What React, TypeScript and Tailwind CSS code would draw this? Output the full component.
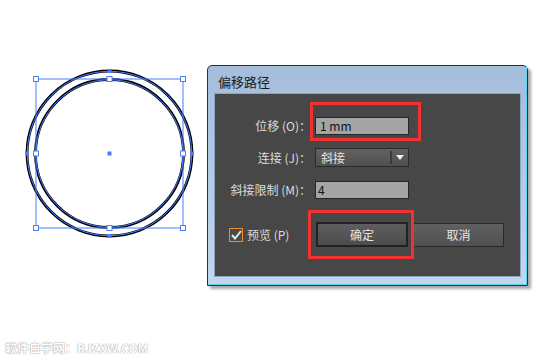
import React from "react";

const CJK = "font-['SimSun','Noto_Sans_CJK_SC',sans-serif]";

const BLUE = "#4a7dff";

// selected artwork: original circle + offset path with bounding box
const Artwork = () => {
  const cx = 109.5;
  const cy = 153.5;
  const handles = [
    [36, 79], [109.5, 79], [183, 79],
    [36, 153.5], [183, 153.5],
    [36, 228], [109.5, 228], [183, 228],
  ];
  const anchors = [
    [cx, 71], [cx, 236], [27, cy], [192, cy],
  ];
  return (
    <svg width="200" height="300" className="shrink-0">
      <circle cx={cx} cy={cy} r={82.5} fill="none" stroke="#000" strokeWidth={2.8} />
      <circle cx={cx} cy={cy} r={82.2} fill="none" stroke={BLUE} strokeWidth={1} />
      <circle cx={cx} cy={cy} r={74} fill="none" stroke="#000" strokeWidth={2.8} />
      <circle cx={cx} cy={cy} r={73.7} fill="none" stroke={BLUE} strokeWidth={1} />
      <rect x={36} y={79} width={147} height={149} fill="none" stroke={BLUE} strokeWidth={1} />
      {handles.map(([x, y], i) => (
        <rect key={i} x={x - 2.5} y={y - 2.5} width={5} height={5} fill="#fff" stroke={BLUE} strokeWidth={1} />
      ))}
      {anchors.map(([x, y], i) => (
        <rect key={i} x={x - 2} y={y - 2} width={4} height={4} fill={BLUE} />
      ))}
      <rect x={cx - 2} y={cy - 2} width={4} height={4} fill={BLUE} />
    </svg>
  );
};

const Label = ({ children }: { children: React.ReactNode }) => (
  <span className={`w-[100px] shrink-0 pr-[4px] text-right text-[12px] leading-none text-[#dcdcdc] ${CJK}`}>
    {children}
  </span>
);

const OffsetDialog = () => (
  <div className="relative mt-[65px] ml-[7px] h-[221px] w-[321px] shrink-0 rounded-t-[5px] border border-[#2e2e2e] bg-linear-to-b from-[#a4bddb] to-[#c2d7ee] shadow-[3px_3px_3px_rgba(0,0,0,0.35)]">
    <div className="flex h-full flex-col border-r border-b border-[#5ed2f4] pr-[5px] pb-[7px] pl-[6px]">
      {/* title */}
      <div className="flex h-[27px] shrink-0 items-center pl-[4px] pt-[3px]">
        <span className={`text-[13px] leading-none text-[#1a1a1a] ${CJK}`}>偏移路径</span>
      </div>

      {/* panel */}
      <div className="flex flex-1 flex-col border border-[#8aa4c4] bg-[#474747] pt-[23px]">
        <div className="flex items-center">
          <Label>位移 (O)：</Label>
          <div className={`flex h-[18px] w-[94px] items-center border border-[#262626] bg-[#a4a4a4] pl-[4px] text-[12px] text-[#111] ${CJK}`}>
            1 mm
          </div>
        </div>

        <div className="mt-[13px] flex items-center">
          <Label>连接 (J)：</Label>
          <div className="flex h-[19px] w-[94px] items-center border border-[#2b2b2b] bg-linear-to-b from-[#626262] to-[#4f4f4f]">
            <span className={`flex-1 pl-[5px] text-[12px] leading-none text-[#e4e4e4] ${CJK}`}>斜接</span>
            <span className="h-[13px] w-[2px] border-x border-x-[#3a3a3a] bg-[#6e6e6e]" />
            <span className="flex w-[16px] justify-center">
              <svg width="8" height="5" viewBox="0 0 8 5">
                <path d="M0 0H8L4 5Z" fill="#f0f0f0" />
              </svg>
            </span>
          </div>
        </div>

        <div className="mt-[14px] flex items-center">
          <Label>斜接限制 (M)：</Label>
          <div className={`flex h-[18px] w-[94px] items-center border border-[#262626] bg-[#a4a4a4] pl-[2px] text-[12px] text-[#111] ${CJK}`}>
            4
          </div>
        </div>

        <div className="mt-[23px] flex items-center pl-[14px]">
          <span className="flex h-[14px] w-[14px] items-center justify-center border border-[#f08a2a] bg-[#4a4a4a]">
            <svg width="11" height="10" viewBox="0 0 11 10">
              <path d="M1 5L4 8.5L10 1" fill="none" stroke="#e8e8e8" strokeWidth={2} />
            </svg>
          </span>
          <span className={`ml-[4px] w-[69px] text-[12px] leading-none text-[#dcdcdc] ${CJK}`}>预览 (P)</span>
          <button className={`h-[25px] w-[92px] border-2 border-[#222] bg-linear-to-b from-[#5e5e5e] to-[#4c4c4c] text-[12px] text-[#e6e6e6] ${CJK}`}>
            确定
          </button>
          <button className={`ml-[5px] h-[24px] w-[91px] border border-[#2a2a2a] bg-linear-to-b from-[#606060] to-[#505050] text-[12px] text-[#e6e6e6] ${CJK}`}>
            取消
          </button>
        </div>
      </div>
    </div>
  </div>
);

export default function App() {
  return (
    <div className="relative h-[361px] w-[558px] overflow-hidden bg-white">
      <div className="flex items-start">
        <Artwork />
        <OffsetDialog />
      </div>

      {/* annotation boxes */}
      <div className="absolute left-[310px] top-[102px] h-[39px] w-[111px] border-[3px] border-[#f03232]" />
      <div className="absolute left-[308px] top-[210px] h-[49px] w-[106px] border-[3px] border-[#f03232]" />

      {/* watermark */}
      <div
        className={`absolute bottom-[7px] left-[5px] text-[12px] font-bold leading-none text-white [text-shadow:0_0_1px_#9a9a9a,0_0_1px_#9a9a9a] ${CJK}`}
      >
        软件自学网：RJZXW.COM
      </div>
    </div>
  );
}
